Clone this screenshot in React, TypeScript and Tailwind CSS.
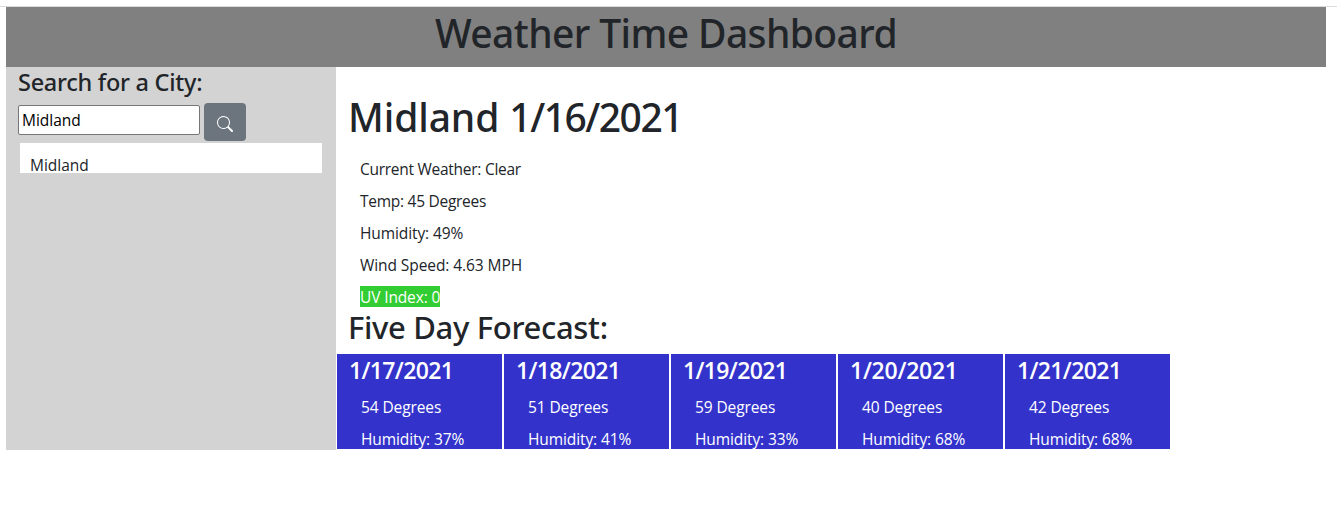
const conditions = [
  { text: "Current Weather: Clear", tracking: "tracking-[-0.27px]" },
  { text: "Temp: 45 Degrees", tracking: "tracking-[-0.27px]" },
  { text: "Humidity: 49%", tracking: "tracking-[-0.1px]" },
  { text: "Wind Speed: 4.63 MPH", tracking: "tracking-[-0.08px]" },
];

const days = [
  { date: "1/17/2021", temp: 54, humidity: 37, tracking: "tracking-[-0.65px]" },
  { date: "1/18/2021", temp: 51, humidity: 41, tracking: "tracking-[-0.65px]" },
  { date: "1/19/2021", temp: 59, humidity: 33, tracking: "tracking-[-0.65px]" },
  { date: "1/20/2021", temp: 40, humidity: 68, tracking: "tracking-[-0.25px]" },
  { date: "1/21/2021", temp: 42, humidity: 68, tracking: "tracking-[-0.65px]" },
];

function SearchIcon() {
  return (
    <svg width="16" height="16" viewBox="0 0 16 16" fill="currentColor">
      <path d="M11.742 10.344a6.5 6.5 0 1 0-1.397 1.398h-.001q.044.06.098.115l3.85 3.85a1 1 0 0 0 1.415-1.414l-3.85-3.85a1 1 0 0 0-.115-.1zM12 6.5a5.5 5.5 0 1 1-11 0 5.5 5.5 0 0 1 11 0" />
    </svg>
  );
}

export default function App() {
  return (
    <div className="h-[512px] overflow-hidden bg-white font-['Open_Sans',sans-serif] text-[15.5px] leading-6 text-[#212529]">
      <div className="mt-[6px] h-px bg-[#d9dcdc]" />
      <header className="ml-[6px] h-[60px] w-[1320px] bg-[#808080]">
        <h1 className="text-center font-['Noto_Sans',sans-serif] text-[39px] leading-[52px] font-medium tracking-[-0.61px]">
          Weather Time Dashboard
        </h1>
      </header>
      <div className="ml-[6px] flex h-[383px]">
        <aside className="w-[330px] bg-[#d3d3d3] pl-3">
          <h2 className="h-9 font-['Noto_Sans',sans-serif] text-[23.5px] leading-[31px] font-medium tracking-[-0.27px]">
            Search for a City:
          </h2>
          <div className="flex h-[38px] gap-1">
            <input
              defaultValue="Midland"
              className="mt-[2px] h-[30px] w-[182px] rounded-[2px] border border-[#767676] bg-white px-[3px] text-black"
            />
            <button className="flex h-[38px] w-[42px] items-center justify-center rounded bg-[#6c757d] pt-[4px] text-white">
              <SearchIcon />
            </button>
          </div>
          <div className="mt-[2px] ml-[2px] h-[30px] w-[302px] overflow-hidden bg-white pt-[10px] pl-[10px]">
            Midland
          </div>
        </aside>
        <main className="pt-6">
          <h1 className="h-[66px] pl-3 font-['Noto_Sans',sans-serif] text-[39px] leading-[51px] font-medium tracking-[-1.5px]">
            <span className="tracking-[-0.1px]">Midland </span>
            1/16/2021
          </h1>
          <div className="flex flex-col gap-2 pl-6">
            {conditions.map((c) => (
              <p key={c.text} className={c.tracking}>
                {c.text}
              </p>
            ))}
            <p className="mt-px h-[21px] w-[80px] bg-[#32cd32] leading-[23px] tracking-[-0.13px] whitespace-nowrap text-white">
              UV Index: 0
            </p>
          </div>
          <h2 className="h-[47px] pl-3 font-['Noto_Sans',sans-serif] text-[31px] leading-[41px] font-medium tracking-[-0.33px]">
            Five Day Forecast:
          </h2>
          <div className="flex gap-[2px] pl-px">
            {days.map((d) => (
              <section key={d.date} className="h-[95px] w-[165px] overflow-hidden bg-[#3333cc] pl-3 text-white">
                <h3 className={`h-[41px] text-[23px] leading-[33px] font-semibold ${d.tracking}`}>{d.date}</h3>
                <p className="mb-2 pl-3 tracking-[-0.1px]">{d.temp} Degrees</p>
                <p className="pl-3 tracking-[-0.1px]">Humidity: {d.humidity}%</p>
              </section>
            ))}
          </div>
        </main>
      </div>
    </div>
  );
}
